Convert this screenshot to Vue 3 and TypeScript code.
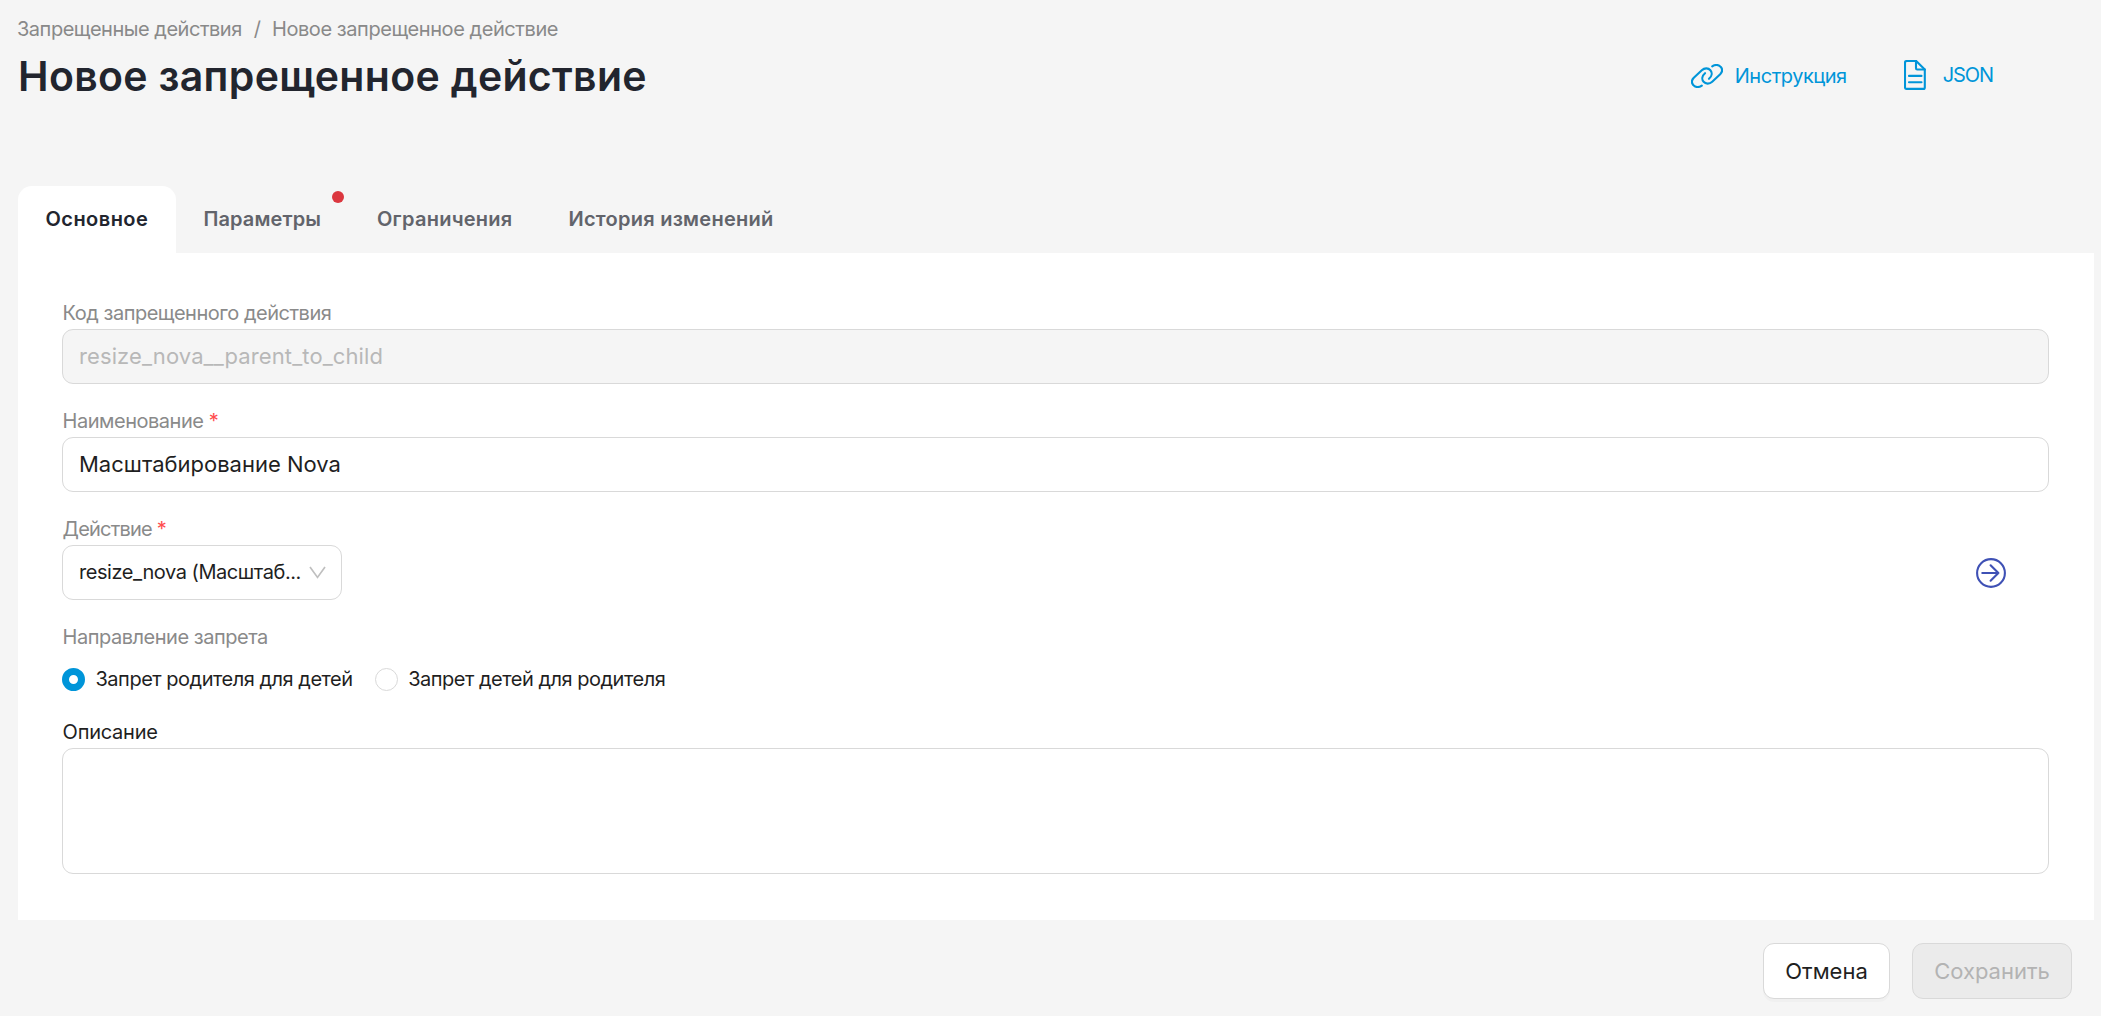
<script setup lang="ts">
import { ref } from 'vue'

interface Tab {
  id: string
  title: string
  alert?: boolean
}

const tabs: Tab[] = [
  { id: 'main', title: 'Основное' },
  { id: 'params', title: 'Параметры', alert: true },
  { id: 'limits', title: 'Ограничения' },
  { id: 'history', title: 'История изменений' },
]
const activeTab = ref('main')

const code = ref('resize_nova__parent_to_child')
const name = ref('Масштабирование Nova')
const action = ref('resize_nova (Масштаб...')
const description = ref('')

const directions = [
  { id: 'parent', title: 'Запрет родителя для детей' },
  { id: 'child', title: 'Запрет детей для родителя' },
]
const direction = ref('parent')
</script>

<template>
  <div class="page">
    <nav class="crumbs">
      <a class="crumb-root">Запрещенные действия</a>
      <span class="slash">/</span>
      <span class="crumb-current">Новое запрещенное действие</span>
    </nav>

    <header class="head">
      <h1>Новое запрещенное действие</h1>
      <div class="links">
        <a class="link link-guide">
          <svg width="32" height="24" viewBox="0 0 32 24">
            <path d="M10.8 21.6C7.8 23.8 4.2 23.4 2.4 21.2.4 19 .7 16 2.8 13.8L10.8 6.2C13.6 3.6 17.4 3.9 19.4 6.2 21.6 8.8 20.8 12.4 18 14.8" />
            <path d="M21.2 2.4C24.2.2 27.8.6 29.6 2.8 31.6 5 31.3 8 29.2 10.2L21.2 17.8C18.4 20.4 14.6 20.1 12.6 17.8 10.4 15.2 11.2 11.6 14 9.2" />
          </svg>
          <span>Инструкция</span>
        </a>
        <a class="link link-json">
          <svg width="22" height="30" viewBox="0 0 22 30">
            <path d="M2.8 1H12.2L20.8 9.4V27.4Q20.8 28.9 19.3 28.9H2.5Q1 28.9 1 27.4V2.5Q1 1 2.8 1Z" />
            <path d="M12 1V8.3Q12 9.5 13.2 9.5H20.8M5 15.9H17.5M5 22.2H17.5" />
          </svg>
          <span>JSON</span>
        </a>
      </div>
    </header>

    <div class="tabs">
      <button
        v-for="tab in tabs"
        :key="tab.id"
        :class="['tab', 'tab-' + tab.id, { active: tab.id === activeTab }]"
        @click="activeTab = tab.id"
      >
        {{ tab.title }}<i v-if="tab.alert" class="dot" />
      </button>
    </div>

    <main class="panel">
      <div class="field">
        <label>Код запрещенного действия</label>
        <input v-model="code" class="control code" disabled />
      </div>
      <div class="field">
        <label>Наименование <b>*</b></label>
        <input v-model="name" class="control" />
      </div>
      <div class="field">
        <label class="tight">Действие <b>*</b></label>
        <div class="action-row">
          <div class="control select">
            <span>{{ action }}</span>
            <svg width="17" height="13" viewBox="0 0 17 13"><path d="M1 1 8.5 11.4 16 1" /></svg>
          </div>
          <svg class="go" width="30" height="30" viewBox="0 0 30 30">
            <circle cx="15" cy="15" r="13.9" />
            <path d="M6.3 15H22.4M14.6 7.3 22.4 15 14.6 22.7" />
          </svg>
        </div>
      </div>
      <div class="field direction">
        <label>Направление запрета</label>
        <div class="radios">
          <div v-for="item in directions" :key="item.id" class="radio" @click="direction = item.id">
            <i :class="{ checked: item.id === direction }" />
            <span>{{ item.title }}</span>
          </div>
        </div>
      </div>
      <div class="field">
        <label class="dark">Описание</label>
        <textarea v-model="description" class="control area" />
      </div>
    </main>

    <footer class="footer">
      <button class="btn">Отмена</button>
      <button class="btn save" disabled>Сохранить</button>
    </footer>
  </div>
</template>

<style>
body {
  background: #f5f5f5;
}
</style>

<style scoped>
.page,
.page * {
  box-sizing: border-box;
}
.page {
  height: 1016px;
  padding: 17px 7px 0 18px;
  overflow: hidden;
  background: #f5f5f5;
  color: #1f1f1f;
  font: 400 20px/24px Inter, 'Liberation Sans', sans-serif;
  letter-spacing: -0.48px;
}
.crumbs {
  display: flex;
  height: 24px;
  margin-left: -1px;
  color: #898989;
  white-space: nowrap;
}
.slash {
  width: 30px;
  text-align: center;
}
.crumb-root {
  width: 225px;
}
.crumb-current {
  letter-spacing: -0.43px;
}
.head {
  display: flex;
  justify-content: space-between;
  margin-top: 10px;
  height: 135px;
}
h1 {
  margin: 0;
  color: #22252e;
  font-size: 41px;
  line-height: 50px;
  font-weight: 600;
  letter-spacing: 0.32px;
}
.links {
  display: flex;
  align-items: flex-start;
  padding-top: 9px;
  margin-right: 101px;
}
.link {
  display: flex;
  align-items: center;
  height: 30px;
  color: #0095d9;
}
.link svg {
  fill: none;
  stroke: currentColor;
  stroke-width: 2.1;
  stroke-linecap: round;
  stroke-linejoin: round;
}
.link-guide {
  width: 213px;
}
.link-guide svg {
  margin: 2px 12px 0 0;
}
.link-guide span {
  margin-top: 2px;
}
.link-json span {
  margin-left: 17px;
  letter-spacing: -1.1px;
}
.tabs {
  display: flex;
  height: 67px;
}
.tab {
  position: relative;
  border: 0;
  border-radius: 14px 14px 0 0;
  padding: 2px 0 4px 27.5px;
  background: transparent;
  color: #62646b;
  font: inherit;
  font-weight: 600;
  letter-spacing: 0.25px;
  text-align: left;
  white-space: nowrap;
}
.tab.active {
  background: #fff;
  color: #22252e;
}
.tab-main {
  width: 158px;
  letter-spacing: 0.45px;
}
.tab-params {
  width: 173.5px;
  letter-spacing: 0.1px;
}
.tab-limits {
  width: 191.5px;
}
.dot {
  position: absolute;
  top: 5px;
  right: 6px;
  width: 12px;
  height: 12px;
  border-radius: 50%;
  background: #db373f;
}
.panel {
  height: 667px;
  padding: 48px 45px 0 44px;
  background: #fff;
}
.field {
  display: flex;
  flex-direction: column;
  margin-bottom: 25px;
}
label {
  height: 24px;
  margin-bottom: 4px;
  padding-left: 0.6px;
  color: #8a8a8a;
}
label.tight {
  letter-spacing: -0.8px;
}
label.dark {
  color: #1f1f1f;
  letter-spacing: -0.25px;
}
label b {
  color: #ff4d4f;
  font-weight: 400;
}
.control {
  display: block;
  width: 100%;
  height: 55px;
  margin: 0;
  border: 1px solid #d9d9d9;
  border-radius: 11px;
  padding: 0 16px 1px;
  outline: 0;
  background: #fff;
  color: #1f1f1f;
  font: inherit;
  font-size: 22px;
  letter-spacing: 0;
}
.code {
  background: #f5f5f5;
  color: #b8b8b8;
  letter-spacing: 0.1px;
}
.action-row {
  display: flex;
  align-items: center;
  justify-content: space-between;
}
.control.select {
  display: flex;
  align-items: center;
  justify-content: space-between;
  width: 280px;
  padding: 0 15px 1px 16px;
  font-size: 20px;
  letter-spacing: -0.44px;
}
.select svg {
  fill: none;
  stroke: #bfbfbf;
  stroke-width: 1.7;
}
.go {
  margin-right: 43px;
  fill: none;
  stroke: #3f51b5;
  stroke-width: 2.1;
  stroke-linecap: round;
  stroke-linejoin: round;
}
.direction {
  height: 70px;
  margin: 1px 0 25px;
}
.radios {
  display: flex;
  gap: 22px;
  margin-top: 14px;
}
.radio {
  display: flex;
  align-items: center;
  height: 24px;
}
.radio i {
  width: 23px;
  height: 23px;
  margin-right: 10.5px;
  border: 1px solid #d9d9d9;
  border-radius: 50%;
  background: #fff;
}
.radio i.checked {
  border: 7.5px solid #0095d9;
}
.area {
  height: 126px;
  resize: none;
}
.footer {
  display: flex;
  justify-content: flex-end;
  gap: 22px;
  padding: 23px 22px 0 0;
}
.btn {
  width: 127px;
  height: 56px;
  border: 1px solid #d9d9d9;
  border-radius: 11px;
  padding: 0;
  background: #fff;
  box-shadow: 0 3px 0 rgba(0, 0, 0, 0.02);
  color: #1f1f1f;
  font: inherit;
  font-size: 22px;
  letter-spacing: 0;
}
.btn.save {
  width: 160px;
  background: #ebebeb;
  box-shadow: none;
  color: #b3b3b3;
}
</style>
